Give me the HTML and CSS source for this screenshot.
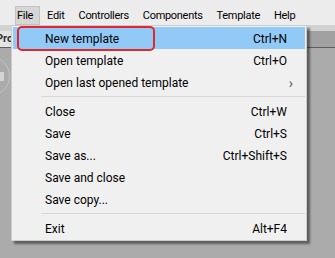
FILE: index.html
```html
<!DOCTYPE html>
<html lang="en">
<head>
  <meta charset="UTF-8" />
  <title>File menu</title>
  <link rel="stylesheet" href="styles.css">
</head>
<body>

  <div class="menubar">
    <span class="menubar-item open">File</span>
    <span class="menubar-item">Edit</span>
    <span class="menubar-item">Controllers</span>
    <span class="menubar-item">Components</span>
    <span class="menubar-item">Template</span>
    <span class="menubar-item">Help</span>
  </div>
  <div class="toolstrip"></div>
  <div class="tabstrip">
    <div class="tab">Pro</div>
  </div>
  <div class="workspace">
    <div class="ring"></div>
  </div>

  <!-- dropdown do menu File -->
  <div class="dropdown">
    <div class="item active"><span>New template</span><span class="key">Ctrl+N</span></div>
    <div class="item"><span>Open template</span><span class="key">Ctrl+O</span></div>
    <div class="item"><span>Open last opened template</span><span class="arrow">&rsaquo;</span></div>
    <div class="sep"></div>
    <div class="item"><span>Close</span><span class="key">Ctrl+W</span></div>
    <div class="item"><span>Save</span><span class="key">Ctrl+S</span></div>
    <div class="item"><span>Save as...</span><span class="key">Ctrl+Shift+S</span></div>
    <div class="item"><span>Save and close</span></div>
    <div class="item"><span>Save copy...</span></div>
    <div class="sep"></div>
    <div class="item"><span>Exit</span><span class="key">Alt+F4</span></div>
  </div>

  <!-- marcação vermelha por cima -->
  <div class="callout"></div>

</body>
</html>
```

FILE: styles.css
```css
* {
  box-sizing: border-box;
}
html, body {
  margin: 0;
  height: 100%;
}
body {
  font-family: Roboto, "Noto Sans", sans-serif;
  font-size: 12px;
  color: #000;
  background: #ababab;
  display: flex;
  flex-direction: column;
  overflow: hidden;
}
.menubar {
  display: flex;
  height: 25px;
  padding: 6px 0 0 15px;
  background: #ececec;
  white-space: nowrap;
  font-size: 11px;
  letter-spacing: -0.3px;
}
.menubar-item {
  height: 19px;
  line-height: 18px;
  padding: 0 6px;
  border: 1px solid transparent;
}
.menubar-item.open {
  padding: 0 6px 0 1px;
  background: #d6d6d6;
  border-color: #c2c2c2;
}
.toolstrip {
  height: 6px;
  background: #d2d2d2;
}
.tabstrip {
  display: flex;
  height: 17px;
  background: #a1a1a1;
  border-bottom: 1px solid #5e5e5e;
}
.tab {
  width: 12px;
  overflow: hidden;
  background: #e4e4e4;
  font-size: 11px;
  font-weight: bold;
  line-height: 16px;
  color: #333;
  text-indent: -4px;
  white-space: nowrap;
}
.workspace {
  flex: 1;
  position: relative;
  overflow: hidden;
}
.ring {
  position: absolute;
  left: -30px;
  top: 8px;
  width: 40px;
  height: 40px;
  border: 1px solid #c4c4c4;
  border-radius: 50%;
}
.ring::after {
  content: "";
  position: absolute;
  left: 28px;
  top: 15px;
  width: 5px;
  height: 9px;
  background: #d4d4d4;
}
.dropdown {
  position: absolute;
  left: 11px;
  top: 25px;
  width: 296px;
  padding: 1px;
  background: #f0f0f0;
  border: 1px solid #cccccc;
  box-shadow: 3px 3px 2px rgba(0, 0, 0, 0.45);
}
.item {
  display: flex;
  justify-content: space-between;
  align-items: center;
  height: 22px;
  padding: 2px 18px 0 32px;
}
.item.active {
  background: #91c9f7;
}
.key {
  color: #000;
}
.arrow {
  font-size: 14px;
  color: #555;
  margin-right: -6px;
}
.sep {
  height: 1px;
  margin: 3px 0 3px 28px;
  background: #d7d7d7;
}
.callout {
  position: absolute;
  left: 17px;
  top: 26px;
  width: 138px;
  height: 25px;
  border: 2px solid #e3262c;
  border-radius: 5px;
}
```
